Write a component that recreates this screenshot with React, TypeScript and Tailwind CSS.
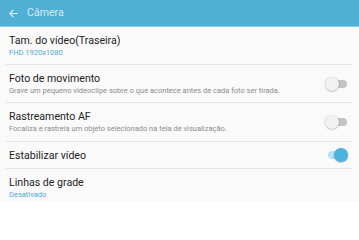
import React from "react";

function Toggle({ on }: { on: boolean }) {
  return (
    <div className="relative w-[23px] h-[14px] shrink-0">
      <div
        className={
          "absolute left-[3px] right-[1px] top-[3px] h-[8px] rounded-full " +
          (on ? "bg-[#b5e1f3]" : "bg-[#c4c4c4]")
        }
      />
      <div
        className={
          "absolute top-0 w-[14px] h-[14px] rounded-full shadow-[0_0.5px_1.5px_rgba(0,0,0,0.35)] " +
          (on ? "right-0 bg-[#4bb3df]" : "left-0 bg-[#f1f1f1]")
        }
      />
    </div>
  );
}

function Row({
  title,
  sub,
  subBlue,
  toggle,
  h,
}: {
  title: string;
  sub?: string;
  subBlue?: boolean;
  toggle?: boolean;
  h: string;
}) {
  return (
    <div className={"shrink-0 flex items-center mx-[6px] border-b border-[#e6e6e6] pl-[3px] pr-[5px] " + h}>
      <div className="flex-1 flex flex-col">
        <div className="text-[10.6px] leading-[13px] text-[#222222]">{title}</div>
        {sub && (
          <div
            className={
              "text-[7.5px] leading-[10px] mt-[1px] " +
              (subBlue ? "text-[#4aaad3]" : "text-[#8c8c8c]")
            }
          >
            {sub}
          </div>
        )}
      </div>
      {toggle !== undefined && <Toggle on={toggle} />}
    </div>
  );
}

export default function App() {
  return (
    <div
      className="w-[359px] h-[202px] overflow-hidden bg-[#fafafa] flex flex-col"
      style={{ fontFamily: "Roboto, 'Noto Sans', sans-serif" }}
    >
      <div className="h-[27px] bg-[#52afd4] flex items-center pl-[8px] shrink-0 border-b border-[#8fcbe4]">
        <svg width="11" height="11" viewBox="0 0 24 24" className="mr-[8px]">
          <path
            d="M20 12H5M11 5l-7 7 7 7"
            fill="none"
            stroke="#e4f3fa"
            strokeWidth="2.4"
            strokeLinecap="square"
          />
        </svg>
        <span className="text-[10.6px] text-[#d3ecf7]">Câmera</span>
      </div>
      <Row h="h-[38px]" title="Tam. do vídeo(Traseira)" sub="FHD 1920x1080" subBlue />
      <Row
        h="h-[38px]"
        title="Foto de movimento"
        sub="Grave um pequeno videoclipe sobre o que acontece antes de cada foto ser tirada."
        toggle={false}
      />
      <Row
        h="h-[39px]"
        title="Rastreamento AF"
        sub="Focaliza e rastreia um objeto selecionado na tela de visualização."
        toggle={false}
      />
      <Row h="h-[27px]" title="Estabilizar vídeo" toggle={true} />
      <Row h="h-[38px]" title="Linhas de grade" sub="Desativado" subBlue />
    </div>
  );
}
